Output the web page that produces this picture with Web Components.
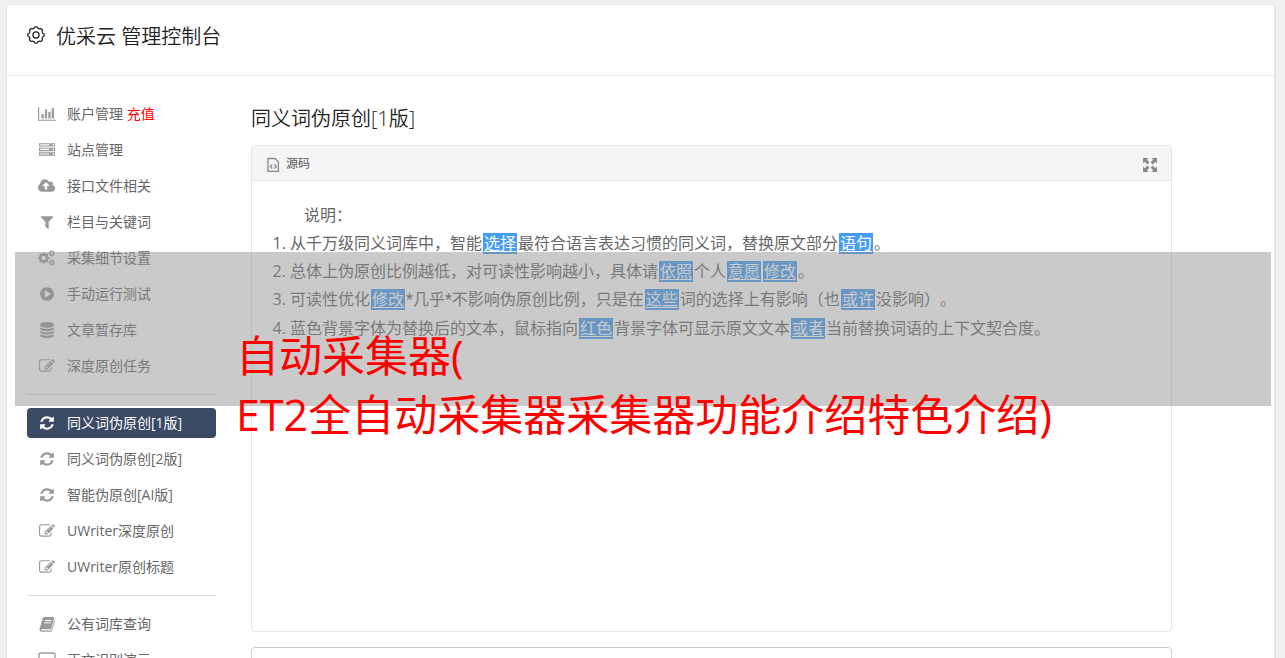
<!DOCTYPE html>
<html lang="zh-CN">
<head>
<meta charset="utf-8">
<title>优采云 管理控制台</title>
<style>
html { scrollbar-width: none; background: #f0f0f0; }
body { margin: 0; color: #666; font-family: "Open Sans", "Noto Sans CJK SC", sans-serif; font-size: 14px; font-weight: 400; text-spacing-trim: space-all; }
</style>
</head>
<body>
<console-app></console-app>
<script>
// Wavy closed outline used for the gear icons.
const gear = (cx, cy, r, amp, n) => {
  const pts = [];
  for (let i = 0; i < 96; i++) {
    const a = i / 96 * Math.PI * 2;
    const d = r + amp * Math.tanh(2 * Math.cos(n * a));
    pts.push((cx + d * Math.cos(a)).toFixed(1) + ' ' + (cy + d * Math.sin(a)).toFixed(1));
  }
  return 'M' + pts.join('L') + 'Z';
};
const hole = (cx, cy, r) => `M${cx - r} ${cy}a${r} ${r} 0 1 0 ${2 * r} 0a${r} ${r} 0 1 0 ${-2 * r} 0z`;
const p = d => `<path fill="currentColor" fill-rule="evenodd" d="${d}"/>`;
const ICONS = {
  gear: [20, 20, `<g fill="none" stroke="currentColor" stroke-width="1.4"><path d="${gear(10, 10, 8.4, .7, 8)}"/><circle cx="10" cy="10" r="3.4"/></g>`],
  chart: [2048, 1792, p('M640 896v512h-256v-512h256zm384-512v1024h-256v-1024h256zm1024 1152v128h-2048v-1536h128v1408h1920zm-640-896v768h-256v-768h256zm384-384v1152h-256v-1152h256z')],
  server: [1792, 1792, p('M128 1408h1024v-128h-1024v128zm0-512h1024v-128h-1024v128zm1568 448q0-40-28-68t-68-28-68 28-28 68 28 68 68 28 68-28 28-68zm-1568-960h1024v-128h-1024v128zm1568 448q0-40-28-68t-68-28-68 28-28 68 28 68 68 28 68-28 28-68zm0-512q0-40-28-68t-68-28-68 28-28 68 28 68 68 28 68-28 28-68zm96 832v384h-1792v-384h1792zm0-512v384h-1792v-384h1792zm0-512v384h-1792v-384h1792z')],
  cloud: [1920, 1792, p('M1280 864q0-14-9-23l-352-352q-9-9-23-9t-23 9l-351 351q-10 12-10 24 0 14 9 23t23 9h224v352q0 13 9.5 22.5t22.5 9.5h192q13 0 22.5-9.5t9.5-22.5v-352h224q13 0 22.5-9.5t9.5-22.5zm640 288q0 159-112.5 271.5t-271.5 112.5h-1088q-185 0-316.5-131.5t-131.5-316.5q0-130 70-240t188-165q-2-30-2-43 0-212 150-362t362-150q156 0 285.5 87t188.5 231q71-62 166-62 106 0 181 75t75 181q0 76-41 138 130 31 213.5 135.5t83.5 238.5z')],
  filter: [1792, 1792, p('M1595 295q17 41-14 70l-493 493v742q0 42-39 59-13 5-25 5-27 0-45-19l-256-256q-19-19-19-45v-486l-493-493q-31-29-14-70 17-39 59-39h1280q42 0 59 39z')],
  cogs: [1920, 1792, p(gear(640, 896, 570, 80, 8) + hole(640, 896, 256) + gear(1536, 384, 310, 60, 6) + hole(1536, 384, 128) + gear(1536, 1408, 310, 60, 6) + hole(1536, 1408, 128))],
  play: [1792, 1792, p('M896 128q209 0 385.5 103t279.5 279.5 103 385.5-103 385.5-279.5 279.5-385.5 103-385.5-103-279.5-279.5-103-385.5 103-385.5 279.5-279.5 385.5-103zm384 823q32-18 32-55t-32-55l-544-320q-31-19-64-1-32 19-32 56v640q0 37 32 56 16 8 32 8 17 0 32-9z')],
  database: [1792, 1792, p('M896 768q237 0 443-43t325-127v170q0 69-103 128t-280 93.5-385 34.5-385-34.5-280-93.5-103-128v-170q119 84 325 127t443 43zm0 768q237 0 443-43t325-127v170q0 69-103 128t-280 93.5-385 34.5-385-34.5-280-93.5-103-128v-170q119 84 325 127t443 43zm0-384q237 0 443-43t325-127v170q0 69-103 128t-280 93.5-385 34.5-385-34.5-280-93.5-103-128v-170q119 84 325 127t443 43zm0-1152q208 0 385 34.5t280 93.5 103 128v128q0 69-103 128t-280 93.5-385 34.5-385-34.5-280-93.5-103-128v-128q0-69 103-128t280-93.5 385-34.5z')],
  edit: [1792, 1792, p('M888 1184l116-116-152-152-116 116v56h96v96h56zm440-720q-16-16-33 1l-350 350q-17 17-1 33t33-1l350-350q17-17 1-33zm80 594v190q0 119-84.5 203.5t-203.5 84.5h-832q-119 0-203.5-84.5t-84.5-203.5v-832q0-119 84.5-203.5t203.5-84.5h832q63 0 117 25 15 7 18 23 3 17-9 29l-49 49q-14 14-32 8-23-6-45-6h-832q-66 0-113 47t-47 113v832q0 66 47 113t113 47h832q66 0 113-47t47-113v-126q0-13 9-22l64-64q15-15 35-7t20 29zm-96-738l288 288-672 672h-288v-288zm444 132l-92 92-288-288 92-92q28-28 68-28t68 28l152 152q28 28 28 68t-28 68z')],
  refresh: [1792, 1792, p('M1639 1056q0 5-1 7-64 268-268 434.5t-478 166.5q-146 0-282.5-55t-243.5-157l-129 129q-19 19-45 19t-45-19-19-45v-448q0-26 19-45t45-19h448q26 0 45 19t19 45-19 45l-137 137q71 66 161 102t187 36q134 0 250-65t186-179q11-17 53-117 8-23 30-23h192q13 0 22.5 9.5t9.5 22.5zm25-800v448q0 26-19 45t-45 19h-448q-26 0-45-19t-19-45 19-45l138-138q-148-137-349-137-134 0-250 65t-186 179q-11 17-53 117-8 23-30 23h-199q-13 0-22.5-9.5t-9.5-22.5v-7q65-268 270-434.5t480-166.5q146 0 284 55.5t245 156.5l130-129q19-19 45-19t45 19 19 45z')],
  book: [16, 16, p('M5 1h9q1.600 0 1.200 1.500L12.300 12q-.4 1.300-1.600 1.300H3q-1 0-1 .6t1 .6h8.300q.9 0 1.200-.9L15.300 4.500q.7.600.4 1.500L13 14.500q-.4 1.200-1.600 1.200H2.700Q.6 15.700.5 13.500q0-.8.300-1.600L3.500 2.500Q4 1 5 1zM6 4l-.3 1h6.600l.3-1zM5.300 6.300l-.3 1h6.600l.3-1z')],
  desktop: [18, 16, '<g fill="none" stroke="currentColor" stroke-width="1.300"><rect x="1" y="1" width="16" height="11" rx="1"/><path d="M2 10h14M9 12v3M5.500 15h7"/></g>'],
  code: [16, 16, '<g fill="none" stroke="currentColor" stroke-width="1.300"><path d="M3 2.500h7l3.400 3.400v9.400H3z"/><path d="M7.200 8.500L5.200 10.500l2 2M9.300 8.500l2 2-2 2"/></g>'],
  expand: [16, 16, p('M1 2h5.500L4.800 3.700 7.400 6.300 5.300 8.400 2.700 5.800 1 7.500zM15 2v5.500l-1.700-1.700-2.600 2.600-2.100-2.100 2.600-2.600L9.500 2zM1 16v-5.500l1.700 1.700 2.600-2.600 2.100 2.100-2.600 2.600L6.500 16zM15 16H9.500l1.700-1.700-2.600-2.600 2.100-2.100 2.600 2.600L15 10.500z')]
};

class BaseElement extends HTMLElement {
  connectedCallback() {
    if (this.shadowRoot) return;
    this.attachShadow({ mode: 'open' }).innerHTML = this.render();
  }
}

customElements.define('ui-icon', class extends BaseElement {
  render() {
    const [w, h, body] = ICONS[this.getAttribute('name')];
    return `<style>:host{display:inline-flex;align-items:center;justify-content:center;height:var(--icon-size,16px)}svg{display:block;height:100%;overflow:visible}</style>
      <svg viewBox="0 0 ${w} ${h}" aria-hidden="true">${body}</svg>`;
  }
});

customElements.define('console-header', class extends BaseElement {
  render() {
    return `<style>
      :host{display:block;border-bottom:1px solid #e5e5e5;padding:16px 20px 23px}
      h1{display:flex;align-items:center;gap:11px;margin:0;font-size:20px;line-height:31px;font-weight:350;color:#222}
      ui-icon{--icon-size:18px;padding-bottom:3px}
      </style><h1><ui-icon name="gear"></ui-icon><span><slot></slot></span></h1>`;
  }
});

customElements.define('nav-item', class extends BaseElement {
  render() {
    return `<style>
      :host{display:block}
      a{display:flex;align-items:center;gap:10px;height:30px;padding:0 10px;border-radius:4px;color:inherit;text-decoration:none;white-space:nowrap}
      span{padding-bottom:2px}
      ui-icon{width:20px;color:#999}
      :host([active]) a{background:#3a4964;color:#fff}
      :host([active]) ui-icon{color:#fff}
      </style><a href="#"><ui-icon name="${this.getAttribute('icon')}"></ui-icon><span><slot></slot></span></a>`;
  }
});

customElements.define('side-nav', class extends BaseElement {
  render() {
    return `<style>
      :host{display:block;width:189px;flex:none;padding-top:23px}
      nav{display:flex;flex-direction:column;gap:6px}
      hr{width:100%;border:0;border-top:1px solid #ddd;margin:7px 0}
      em{color:#f00;font-style:normal}
      </style><nav>
      <nav-item icon="chart">账户管理 <em>充值</em></nav-item>
      <nav-item icon="server">站点管理</nav-item>
      <nav-item icon="cloud">接口文件相关</nav-item>
      <nav-item icon="filter">栏目与关键词</nav-item>
      <nav-item icon="cogs">采集细节设置</nav-item>
      <nav-item icon="play">手动运行测试</nav-item>
      <nav-item icon="database">文章暂存库</nav-item>
      <nav-item icon="edit">深度原创任务</nav-item>
      <hr>
      <nav-item icon="refresh" active>同义词伪原创[1版]</nav-item>
      <nav-item icon="refresh">同义词伪原创[2版]</nav-item>
      <nav-item icon="refresh">智能伪原创[AI版]</nav-item>
      <nav-item icon="edit">UWriter深度原创</nav-item>
      <nav-item icon="edit">UWriter原创标题</nav-item>
      <hr>
      <nav-item icon="book">公有词库查询</nav-item>
      <nav-item icon="desktop">正文识别演示</nav-item>
      </nav>`;
  }
});

customElements.define('editor-card', class extends BaseElement {
  render() {
    return `<style>
      :host{display:block;border:1px solid #e5e5e5;border-radius:4px;overflow:hidden}
      header{box-sizing:border-box;display:flex;justify-content:space-between;align-items:center;height:35px;padding:2px 13px 0;background:#f5f5f5;border-bottom:1px solid #e5e5e5}
      button{display:flex;align-items:center;gap:5px;margin:0;padding:0;border:0;background:none;font:inherit;font-size:12px;color:#555;line-height:20px}
      ui-icon{color:#888}
      .body{min-height:430px;padding:20px 20px 0;font-size:16px;line-height:28px}
      </style><header><button type="button"><ui-icon name="code"></ui-icon>源码</button>
      <button type="button" aria-label="全屏"><ui-icon name="expand"></ui-icon></button></header>
      <div class="body"><slot></slot></div>`;
  }
});

customElements.define('synonym-word', class extends BaseElement {
  render() {
    return `<style>:host{display:inline}a{margin:0 1px;padding:0 1px;background:linear-gradient(#459df5,#459df5) center/100% 21px no-repeat;color:#fff;text-decoration:underline;text-underline-offset:2px}</style><a href="#"><slot></slot></a>`;
  }
});

customElements.define('rewrite-page', class extends BaseElement {
  render() {
    return `<style>
      :host{display:grid;grid-template-columns:minmax(0,1fr) 82px;flex:1;min-width:0;padding-top:28px;row-gap:11px;align-content:start}
      h2{margin:0;font-size:20px;line-height:30px;font-weight:350;color:#222;white-space:nowrap}
      h2,editor-card,textarea{grid-column:1}
      p{margin:0;text-indent:32px}
      ol{margin:0;padding-left:18px}
      i{font-family:Roboto,sans-serif;font-style:normal}
      textarea{box-sizing:border-box;width:100%;height:200px;margin:4px 0 0;border:1px solid #ccc;border-radius:4px;resize:none;font:inherit}
      </style><h2>同义词伪原创[1版]</h2>
      <editor-card><p>说明：</p><ol>
      <li>从千万级同义词库中，智能<synonym-word>选择</synonym-word>最符合语言表达习惯的同义词，替换原文部分<synonym-word>语句</synonym-word>。</li>
      <li>总体上伪原创比例越低，对可读性影响越小，具体请<synonym-word>依照</synonym-word>个人<synonym-word>意愿</synonym-word><synonym-word>修改</synonym-word>。</li>
      <li>可读性优化<synonym-word>修改</synonym-word><i>*</i>几乎<i>*</i>不影响伪原创比例，只是在<synonym-word>这些</synonym-word>词的选择上有影响（也<synonym-word>或许</synonym-word>没影响）。</li>
      <li>蓝色背景字体为替换后的文本，鼠标指向<synonym-word>红色</synonym-word>背景字体可显示原文文本<synonym-word>或者</synonym-word>当前替换词语的上下文契合度。</li>
      </ol></editor-card>
      <textarea aria-label="原文"></textarea>`;
  }
});

customElements.define('title-banner', class extends BaseElement {
  render() {
    return `<style>
      :host{display:block;position:absolute;top:252px;left:15px;right:14px;height:154px;background:rgba(145,145,145,.48);pointer-events:none}
      p{margin:0;padding:74px 0 0 221px;font-size:43px;line-height:59px;color:#f00;font-weight:400;white-space:nowrap}
      </style><p><slot></slot></p>`;
  }
});

customElements.define('console-app', class extends BaseElement {
  render() {
    return `<style>
      :host{display:block;position:relative;padding:4px 9px 20px 6px}
      main{background:#fff;border:1px solid #e5e5e5;border-right-width:2px;border-radius:4px}
      .columns{display:flex;gap:35px;padding:0 20px 20px}
      </style><main><console-header>优采云 管理控制台</console-header>
      <div class="columns"><side-nav></side-nav><rewrite-page></rewrite-page></div></main>
      <title-banner>自动采集器(<br>ET2全自动采集器采集器功能介绍特色介绍)</title-banner>`;
  }
});
</script>
</body>
</html>
